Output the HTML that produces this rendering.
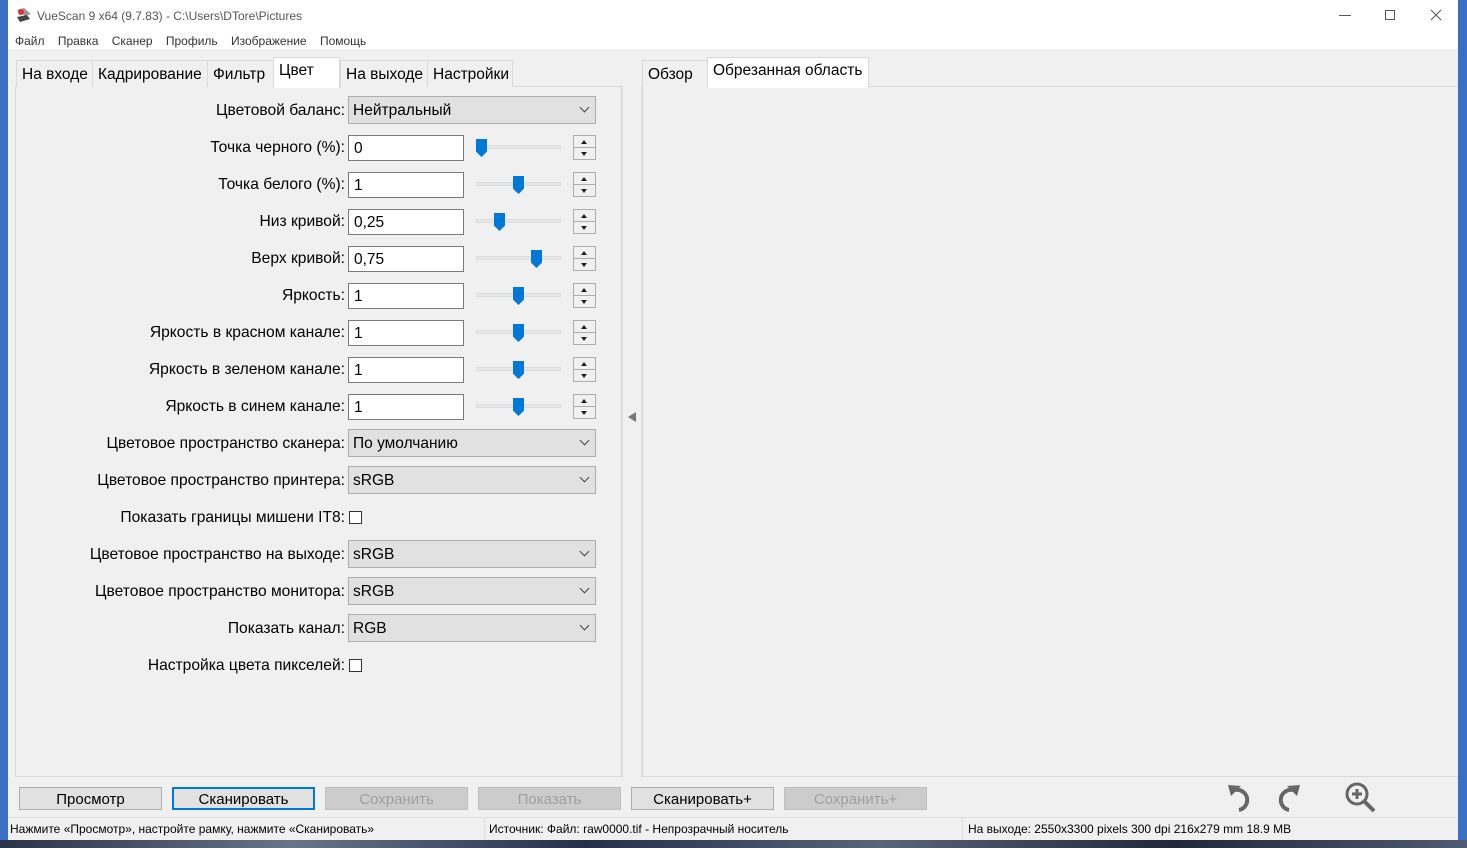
<!DOCTYPE html>
<html><head><meta charset="utf-8"><style>
*{box-sizing:border-box;margin:0;padding:0}
body{width:1467px;height:848px;overflow:hidden;position:relative;background:#3a6fc4;font-family:"Liberation Sans",sans-serif;color:#000}
.a{position:absolute}
.desk{left:0;top:840px;width:1467px;height:8px;background:linear-gradient(90deg,#2a3348,#6a7488 20%,#243048 40%,#5a6478 60%,#20283a 80%,#505a70)}
.win{left:8px;top:0;width:1450px;height:840px;background:#f0f0f0}
.title{left:8px;top:0;width:1450px;height:49px;background:#fff}
.t12{font-size:12px;color:#555}
.tab{position:absolute;top:60px;height:27px;border:1px solid #d9d9d9;border-bottom:none;background:#f0f0f0;font-size:15.5px;padding:5px 0 0 5px;white-space:nowrap}
.tab.sel{top:57px;height:31px;background:#fff;padding-top:4px;z-index:2}
.panel{position:absolute;border:1px solid #d9d9d9;background:#f0f0f0}
.lbl{position:absolute;right:1122px;font-size:15.6px;white-space:nowrap;text-align:right}
.fld{position:absolute;left:348px;width:116px;height:26px;border:1px solid #7a7a7a;background:#fff;font-size:15.5px;padding:4px 0 0 5px}
.cmb{position:absolute;left:348px;width:248px;height:28px;border:1px solid #adadad;background:#e1e1e1;font-size:15.5px;padding:5px 0 0 4px}
.cmb:after{content:"";position:absolute;right:7px;top:7px;width:6px;height:6px;border-right:1px solid #444;border-bottom:1px solid #444;transform:rotate(45deg)}
.trk{position:absolute;left:476px;width:85px;height:4px;background:#e7e7e7;border:1px solid #dcdcdc}
.thb{position:absolute;width:11px;height:18px;background:#0078d7;clip-path:polygon(0 0,100% 0,100% 70%,50% 100%,0 70%)}
.spn{position:absolute;left:573px;width:23px;height:26px}
.spn div{height:13px;border:1px solid #adadad;background:#f0f0f0;position:relative}
.spn div+div{margin-top:-1px}
.spn div:after{content:"";position:absolute;left:7px;top:4px;border-left:3px solid transparent;border-right:3px solid transparent}
.spn .u:after{border-bottom:4px solid #222}
.spn .d:after{border-top:4px solid #222}
.chk{position:absolute;left:349px;width:13px;height:13px;border:1px solid #333;background:#fff}
.btn{position:absolute;top:787px;width:143px;height:23px;border:1px solid #adadad;background:#e1e1e1;font-size:15px;text-align:center;padding-top:3px}
.btn.dis{color:#a0a0a0;background:#ccc;border-color:#bfbfbf}
.st{position:absolute;top:822px;font-size:12px}
</style></head><body>
<div class="a desk"></div>
<div class="a win"></div>
<div class="a title"></div>
<svg class="a" style="left:15px;top:7px" width="18" height="16" viewBox="0 0 18 16"><path d="M2 3 L9 1 L16 7 L10 9Z" fill="#999"/><circle cx="6" cy="5" r="3" fill="#d33"/><path d="M2 10 L12 8 L15 12 L5 15Z" fill="#444"/></svg>
<div class="a t12" style="left:37px;top:9px">VueScan 9 x64 (9.7.83) - C:\Users\DTore\Pictures</div>
<div class="a" style="left:1339px;top:15px;width:12px;height:1px;background:#555"></div>
<div class="a" style="left:1385px;top:10px;width:10px;height:10px;border:1px solid #555"></div>
<svg class="a" style="left:1430px;top:9px" width="12" height="12"><path d="M1 1L11 11M11 1L1 11" stroke="#555"/></svg>
<div class="a t12" style="left:15px;top:34px;color:#333;word-spacing:0">Файл&nbsp;&nbsp;&nbsp;&nbsp;Правка&nbsp;&nbsp;&nbsp;&nbsp;Сканер&nbsp;&nbsp;&nbsp;&nbsp;Профиль&nbsp;&nbsp;&nbsp;&nbsp;Изображение&nbsp;&nbsp;&nbsp;&nbsp;Помощь</div>

<div class="panel" style="left:15px;top:86px;width:607px;height:691px"></div>
<div class="tab" style="left:16px;width:77px">На входе</div>
<div class="tab" style="left:92px;width:116px">Кадрирование</div>
<div class="tab" style="left:207px;width:67px">Фильтр</div>
<div class="tab sel" style="left:273px;width:67px">Цвет</div>
<div class="tab" style="left:340px;width:88px">На выходе</div>
<div class="tab" style="left:427px;width:86px">Настройки</div>

<div class="a" style="left:622px;top:86px;width:20px;height:691px;border-left:1px solid #ddd;border-right:1px solid #ddd"></div>
<div class="a" style="left:628px;top:412px;border-top:5px solid transparent;border-bottom:5px solid transparent;border-right:8px solid #777"></div>

<div class="panel" style="left:642px;top:86px;width:816px;height:691px;border-right:none"></div>
<div class="tab" style="left:642px;width:66px">Обзор</div>
<div class="tab sel" style="left:707px;width:162px">Обрезанная область</div>

<div class="lbl" style="top:102px">Цветовой баланс:</div><div class="cmb" style="top:96px">Нейтральный</div>
<div class="lbl" style="top:139px">Точка черного (%):</div><div class="fld" style="top:135px">0</div><div class="trk" style="top:145px"></div><div class="thb" style="left:476px;top:139px"></div><div class="spn" style="top:135px"><div class="u"></div><div class="d"></div></div>
<div class="lbl" style="top:176px">Точка белого (%):</div><div class="fld" style="top:172px">1</div><div class="trk" style="top:182px"></div><div class="thb" style="left:513px;top:176px"></div><div class="spn" style="top:172px"><div class="u"></div><div class="d"></div></div>
<div class="lbl" style="top:213px">Низ кривой:</div><div class="fld" style="top:209px">0,25</div><div class="trk" style="top:219px"></div><div class="thb" style="left:494px;top:213px"></div><div class="spn" style="top:209px"><div class="u"></div><div class="d"></div></div>
<div class="lbl" style="top:250px">Верх кривой:</div><div class="fld" style="top:246px">0,75</div><div class="trk" style="top:256px"></div><div class="thb" style="left:531px;top:250px"></div><div class="spn" style="top:246px"><div class="u"></div><div class="d"></div></div>
<div class="lbl" style="top:287px">Яркость:</div><div class="fld" style="top:283px">1</div><div class="trk" style="top:293px"></div><div class="thb" style="left:513px;top:287px"></div><div class="spn" style="top:283px"><div class="u"></div><div class="d"></div></div>
<div class="lbl" style="top:324px">Яркость в красном канале:</div><div class="fld" style="top:320px">1</div><div class="trk" style="top:330px"></div><div class="thb" style="left:513px;top:324px"></div><div class="spn" style="top:320px"><div class="u"></div><div class="d"></div></div>
<div class="lbl" style="top:361px">Яркость в зеленом канале:</div><div class="fld" style="top:357px">1</div><div class="trk" style="top:367px"></div><div class="thb" style="left:513px;top:361px"></div><div class="spn" style="top:357px"><div class="u"></div><div class="d"></div></div>
<div class="lbl" style="top:398px">Яркость в синем канале:</div><div class="fld" style="top:394px">1</div><div class="trk" style="top:404px"></div><div class="thb" style="left:513px;top:398px"></div><div class="spn" style="top:394px"><div class="u"></div><div class="d"></div></div>
<div class="lbl" style="top:435px">Цветовое пространство сканера:</div><div class="cmb" style="top:429px">По умолчанию</div>
<div class="lbl" style="top:472px">Цветовое пространство принтера:</div><div class="cmb" style="top:466px">sRGB</div>
<div class="lbl" style="top:509px">Показать границы мишени IT8:</div><div class="chk" style="top:511px"></div>
<div class="lbl" style="top:546px">Цветовое пространство на выходе:</div><div class="cmb" style="top:540px">sRGB</div>
<div class="lbl" style="top:583px">Цветовое пространство монитора:</div><div class="cmb" style="top:577px">sRGB</div>
<div class="lbl" style="top:620px">Показать канал:</div><div class="cmb" style="top:614px">RGB</div>
<div class="lbl" style="top:657px">Настройка цвета пикселей:</div><div class="chk" style="top:659px"></div>

<div class="btn" style="left:19px">Просмотр</div>
<div class="btn" style="left:172px;border:2px solid #0078d7;padding-top:2px">Сканировать</div>
<div class="btn dis" style="left:325px">Сохранить</div>
<div class="btn dis" style="left:478px">Показать</div>
<div class="btn" style="left:631px">Сканировать+</div>
<div class="btn dis" style="left:784px">Сохранить+</div>

<svg class="a" style="left:1226px;top:780px" width="80" height="36" viewBox="0 0 80 36">
<path d="M9 10 A10 10 0 1 1 13 30" fill="none" stroke="#666" stroke-width="4"/><path d="M2 5 L15 6 L5 16Z" fill="#666"/>
<path d="M67 10 A10 10 0 1 0 63 30" fill="none" stroke="#666" stroke-width="4"/><path d="M74 5 L61 6 L71 16Z" fill="#666"/>
</svg>
<svg class="a" style="left:1343px;top:781px" width="36" height="34" viewBox="0 0 36 34"><circle cx="14" cy="13" r="10" fill="none" stroke="#666" stroke-width="3"/><path d="M14 8V18M9 13H19" stroke="#666" stroke-width="3"/><path d="M21 20L31 30" stroke="#666" stroke-width="4"/></svg>

<div class="a" style="left:8px;top:817px;width:1450px;height:1px;background:#ddd"></div>
<div class="st" style="left:10px">Нажмите «Просмотр», настройте рамку, нажмите «Сканировать»</div>
<div class="a" style="left:484px;top:818px;width:1px;height:22px;background:#ddd"></div>
<div class="st" style="left:489px">Источник: Файл: raw0000.tif - Непрозрачный носитель</div>
<div class="a" style="left:962px;top:818px;width:1px;height:22px;background:#ddd"></div>
<div class="st" style="left:968px">На выходе: 2550x3300 pixels 300 dpi 216x279 mm 18.9 MB</div>
</body></html>
